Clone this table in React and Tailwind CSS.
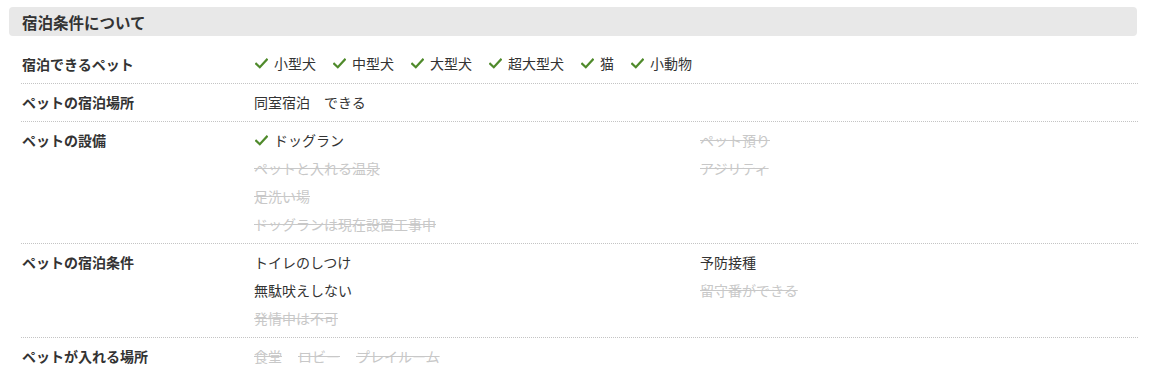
import React from "react";

const Check = () => (
  <svg width="13" height="11" viewBox="0 0 13 11" className="mr-[6px] shrink-0">
    <path d="M1.2 5.8 L4.8 9.2 L11.8 1.6" fill="none" stroke="#4f8a2b" strokeWidth="2.2" strokeLinecap="square" />
  </svg>
);

const On = ({ children, check }) => (
  <div className="flex items-center h-[28px] text-[#333]">
    {check && <Check />}
    <span>{children}</span>
  </div>
);
const Off = ({ children }) => (
  <div className="flex items-center h-[28px] text-[#c8c8c8] line-through">{children}</div>
);

const Row = ({ label, children, last }) => (
  <div className={"flex pt-[4px] pb-[5px] " + (last ? "" : "border-b border-dotted border-[#c4c4c4]")}>
    <div className="w-[233px] pl-[1px] h-[28px] flex items-center font-bold text-[#333]">{label}</div>
    <div className="flex-1">{children}</div>
  </div>
);

export default function App() {
  const pets = ["小型犬", "中型犬", "大型犬", "超大型犬", "猫", "小動物"];
  return (
    <div
      className="w-[1150px] h-[378px] bg-white text-[14px] leading-[28px] overflow-hidden"
      style={{ fontFamily: '"Noto Sans CJK JP", "Noto Sans", sans-serif' }}
    >
      <div className="pt-[7px] pl-[9px] w-[1137px]">
        <div className="h-[29px] bg-[#e8e8e8] rounded-[4px] flex items-center pl-[13px] font-bold text-[15.5px] text-[#333]">
          宿泊条件について
        </div>
        <div className="ml-[12px] mt-[10px] mr-[-1px]">
          <Row label="宿泊できるペット">
            <div className="flex items-center h-[28px] text-[#333] pl-[1px] -mt-[1px]">
              {pets.map((p) => (
                <div key={p} className="flex items-center mr-[17px]">
                  <Check />
                  <span>{p}</span>
                </div>
              ))}
            </div>
          </Row>
          <Row label="ペットの宿泊場所">
            <On>同室宿泊　できる</On>
          </Row>
          <Row label="ペットの設備">
            <div className="grid grid-cols-[446px_1fr]">
              <div>
                <div className="pl-[1px]"><On check>ドッグラン</On></div>
                <Off>ペットと入れる温泉</Off>
                <Off>足洗い場</Off>
                <Off>ドッグランは現在設置工事中</Off>
              </div>
              <div>
                <Off>ペット預り</Off>
                <Off>アジリティ</Off>
              </div>
            </div>
          </Row>
          <Row label="ペットの宿泊条件">
            <div className="grid grid-cols-[446px_1fr]">
              <div>
                <On>トイレのしつけ</On>
                <On>無駄吠えしない</On>
                <Off>発情中は不可</Off>
              </div>
              <div>
                <On>予防接種</On>
                <Off>留守番ができる</Off>
              </div>
            </div>
          </Row>
          <Row label="ペットが入れる場所" last>
            <div className="flex h-[28px] items-center text-[#c8c8c8] line-through gap-[16px]">
              <span>食堂</span>
              <span>ロビー</span>
              <span>プレイルーム</span>
            </div>
          </Row>
        </div>
      </div>
    </div>
  );
}
